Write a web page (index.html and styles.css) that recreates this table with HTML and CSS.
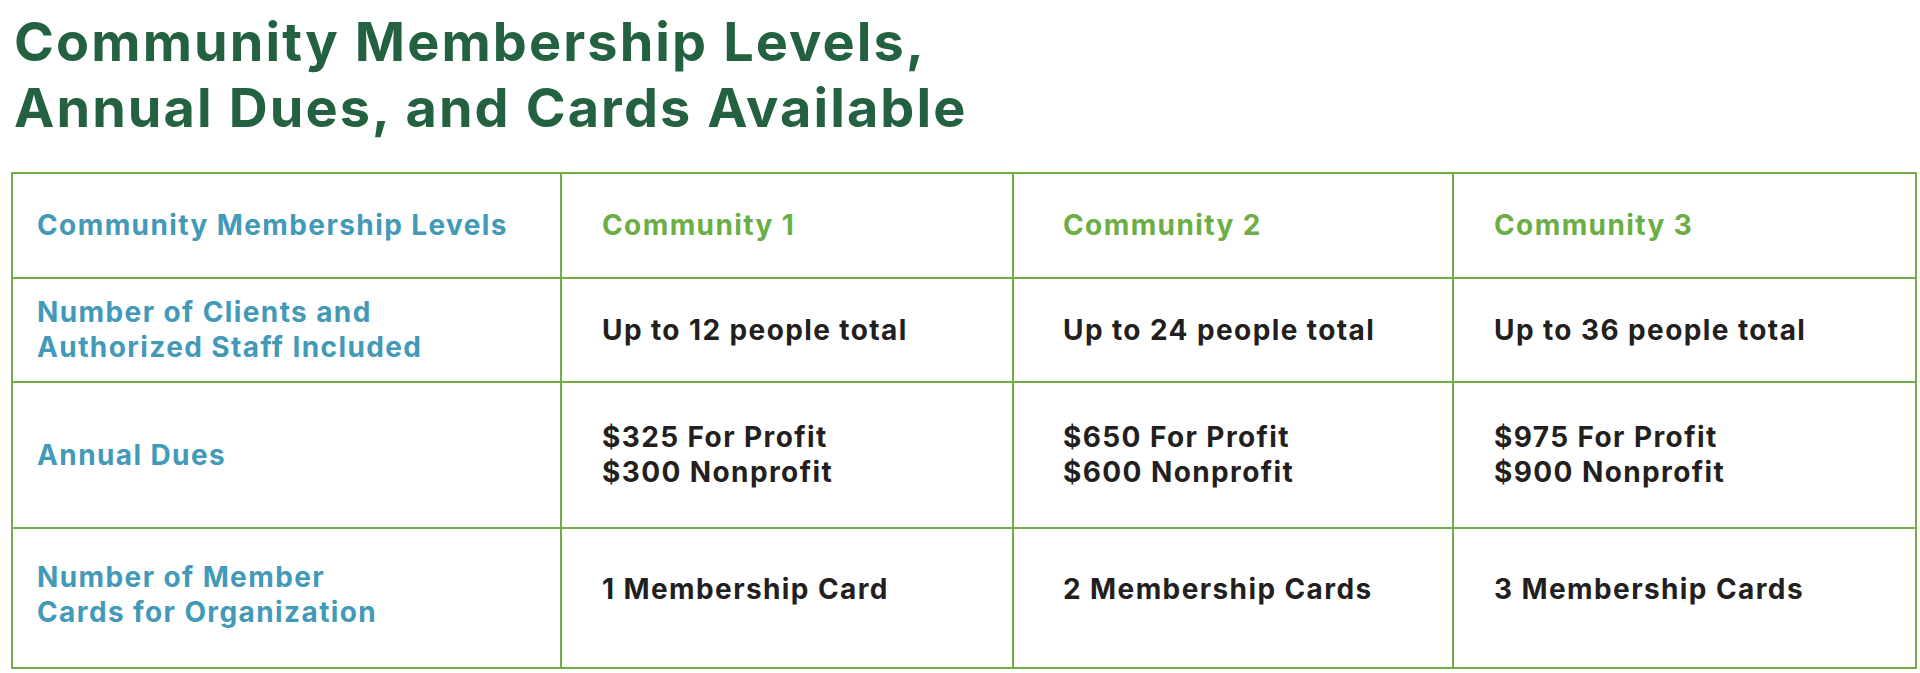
FILE: index.html
```html
<!DOCTYPE html>
<html lang="en">
<head>
<meta charset="utf-8">
<title>Community Membership Levels</title>
<link rel="stylesheet" href="styles.css">
</head>
<body>
<main class="page">
  <h1 class="title">Community Membership Levels,<br>Annual Dues, and Cards Available</h1>
  <table class="levels">
    <colgroup>
      <col class="c-label">
      <col class="c-one">
      <col class="c-two">
      <col class="c-three">
    </colgroup>
    <tr class="r-head">
      <th class="label">Community Membership Levels</th>
      <th class="level p1">Community 1</th>
      <th class="level p2">Community 2</th>
      <th class="level p3">Community 3</th>
    </tr>
    <tr class="r-people">
      <th class="label">Number of Clients and<br>Authorized Staff Included</th>
      <td class="p1">Up to 12 people total</td>
      <td class="p2">Up to 24 people total</td>
      <td class="p3">Up to 36 people total</td>
    </tr>
    <tr class="r-dues">
      <th class="label">Annual Dues</th>
      <td class="p1">$325 For Profit<br>$300 Nonprofit</td>
      <td class="p2">$650 For Profit<br>$600 Nonprofit</td>
      <td class="p3">$975 For Profit<br>$900 Nonprofit</td>
    </tr>
    <tr class="r-cards">
      <th class="label">Number of Member<br>Cards for Organization</th>
      <td class="p1">1 Membership Card</td>
      <td class="p2">2 Membership Cards</td>
      <td class="p3">3 Membership Cards</td>
    </tr>
  </table>
</main>
</body>
</html>
```

FILE: styles.css
```css
html, body {
  margin: 0;
  padding: 0;
  background: #ffffff;
}

.page {
  padding: 9px 5px 0 11px;
  font-family: "Inter", "Liberation Sans", sans-serif;
}

.title {
  margin: 0 0 31px 3px;
  font-size: 54px;
  line-height: 66px;
  font-weight: 700;
  color: #236140;
  letter-spacing: 2.1px;
}

.levels {
  border-collapse: collapse;
  table-layout: fixed;
  width: 1904px;
  font-size: 28px;
  line-height: 35px;
  font-weight: 700;
  letter-spacing: 1.4px;
}

.c-label { width: 549px; }
.c-one { width: 452px; }
.c-two { width: 440px; }
.c-three { width: 463px; }

.levels th,
.levels td {
  border: 2px solid #70ad47;
  vertical-align: middle;
  text-align: left;
  padding: 0;
  color: #231f20;
}

.levels .label {
  color: #4299b8;
  padding-left: 24px;
}

.levels .level {
  color: #6aae45;
}

.levels .p1 { padding-left: 40px; }
.levels .p2 { padding-left: 49px; }
.levels .p3 { padding-left: 40px; }

.r-head { height: 105px; }
.r-people { height: 104px; }
.r-dues { height: 146px; }
.r-cards { height: 140px; }

.r-cards td { padding-bottom: 18px; }
.r-cards .label { padding-bottom: 6px; }
```
